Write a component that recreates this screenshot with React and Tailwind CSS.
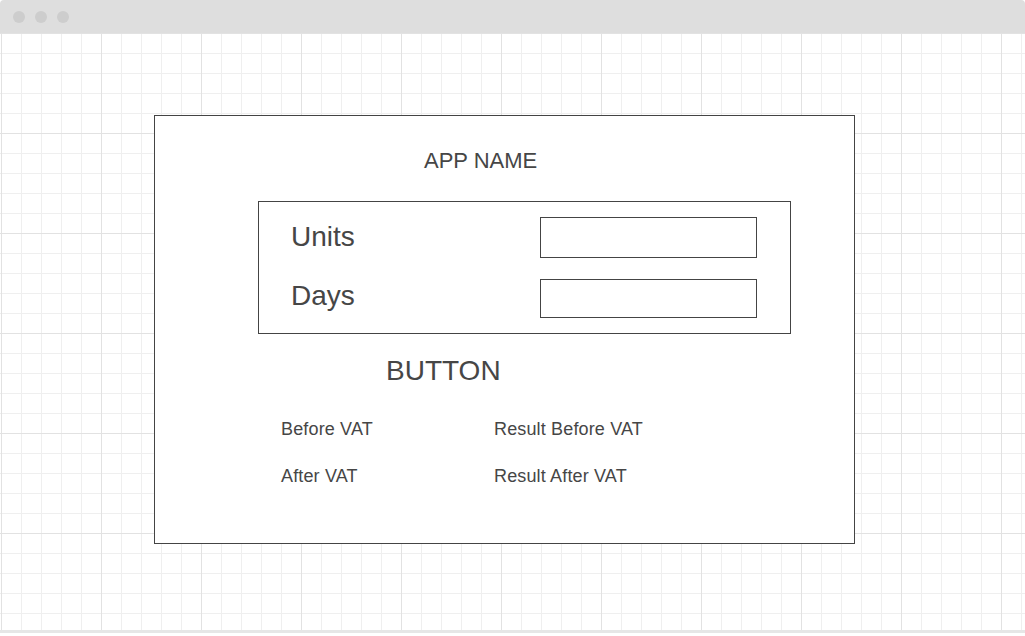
export default function App() {
  return (
    <div className="h-[636px] w-[1025px] overflow-hidden bg-white font-['Liberation_Sans',Arial,sans-serif] text-[#464646]">
      {/* title bar */}
      <div className="flex h-[33px] items-center gap-[10px] rounded-t-[4px] bg-[#dedede] pl-[13px]">
        <span className="h-[12px] w-[12px] rounded-full bg-[#cdcdcd]" />
        <span className="h-[12px] w-[12px] rounded-full bg-[#cdcdcd]" />
        <span className="h-[12px] w-[12px] rounded-full bg-[#cdcdcd]" />
      </div>

      {/* canvas */}
      <div className="h-[600px] border-b-[3px] border-[#e6e6e6] bg-white bg-[linear-gradient(to_right,#e2e2e2_1px,transparent_1px),linear-gradient(to_bottom,#e2e2e2_1px,transparent_1px),linear-gradient(to_right,#efefef_1px,transparent_1px),linear-gradient(to_bottom,#efefef_1px,transparent_1px)] bg-[size:100px_100px,100px_100px,20px_20px,20px_20px] bg-[position:1px_0,0_0,1px_0,0_0] pt-[82px] pl-[154px]">
        <div className="flex h-[429px] w-[701px] flex-col border border-[#444] bg-white">
          <h1 className="ml-[269px] mt-[32px] text-[22px] leading-[26px]">APP NAME</h1>

          <div className="ml-[103px] mt-[27px] grid h-[133px] w-[533px] grid-cols-[249px_217px] grid-rows-[41px_39px] gap-y-[21px] border border-[#444] pl-[32px] pt-[15px]">
            <label className="flex items-center pb-[2px] text-[28px]">Units</label>
            <input type="text" className="border border-[#444] bg-white outline-none" />
            <label className="flex items-center pb-[6px] text-[28px]">Days</label>
            <input type="text" className="border border-[#444] bg-white outline-none" />
          </div>

          <button className="ml-[231px] mt-[21px] self-start text-[28px] leading-[32px]">
            BUTTON
          </button>

          <div className="ml-[126px] mt-[31px] grid grid-cols-[213px_auto] gap-y-[25px] text-[18px] leading-[22px] tracking-[0.15px]">
            <span>Before VAT</span>
            <span>Result Before VAT</span>
            <span>After VAT</span>
            <span>Result After VAT</span>
          </div>
        </div>
      </div>
    </div>
  );
}
